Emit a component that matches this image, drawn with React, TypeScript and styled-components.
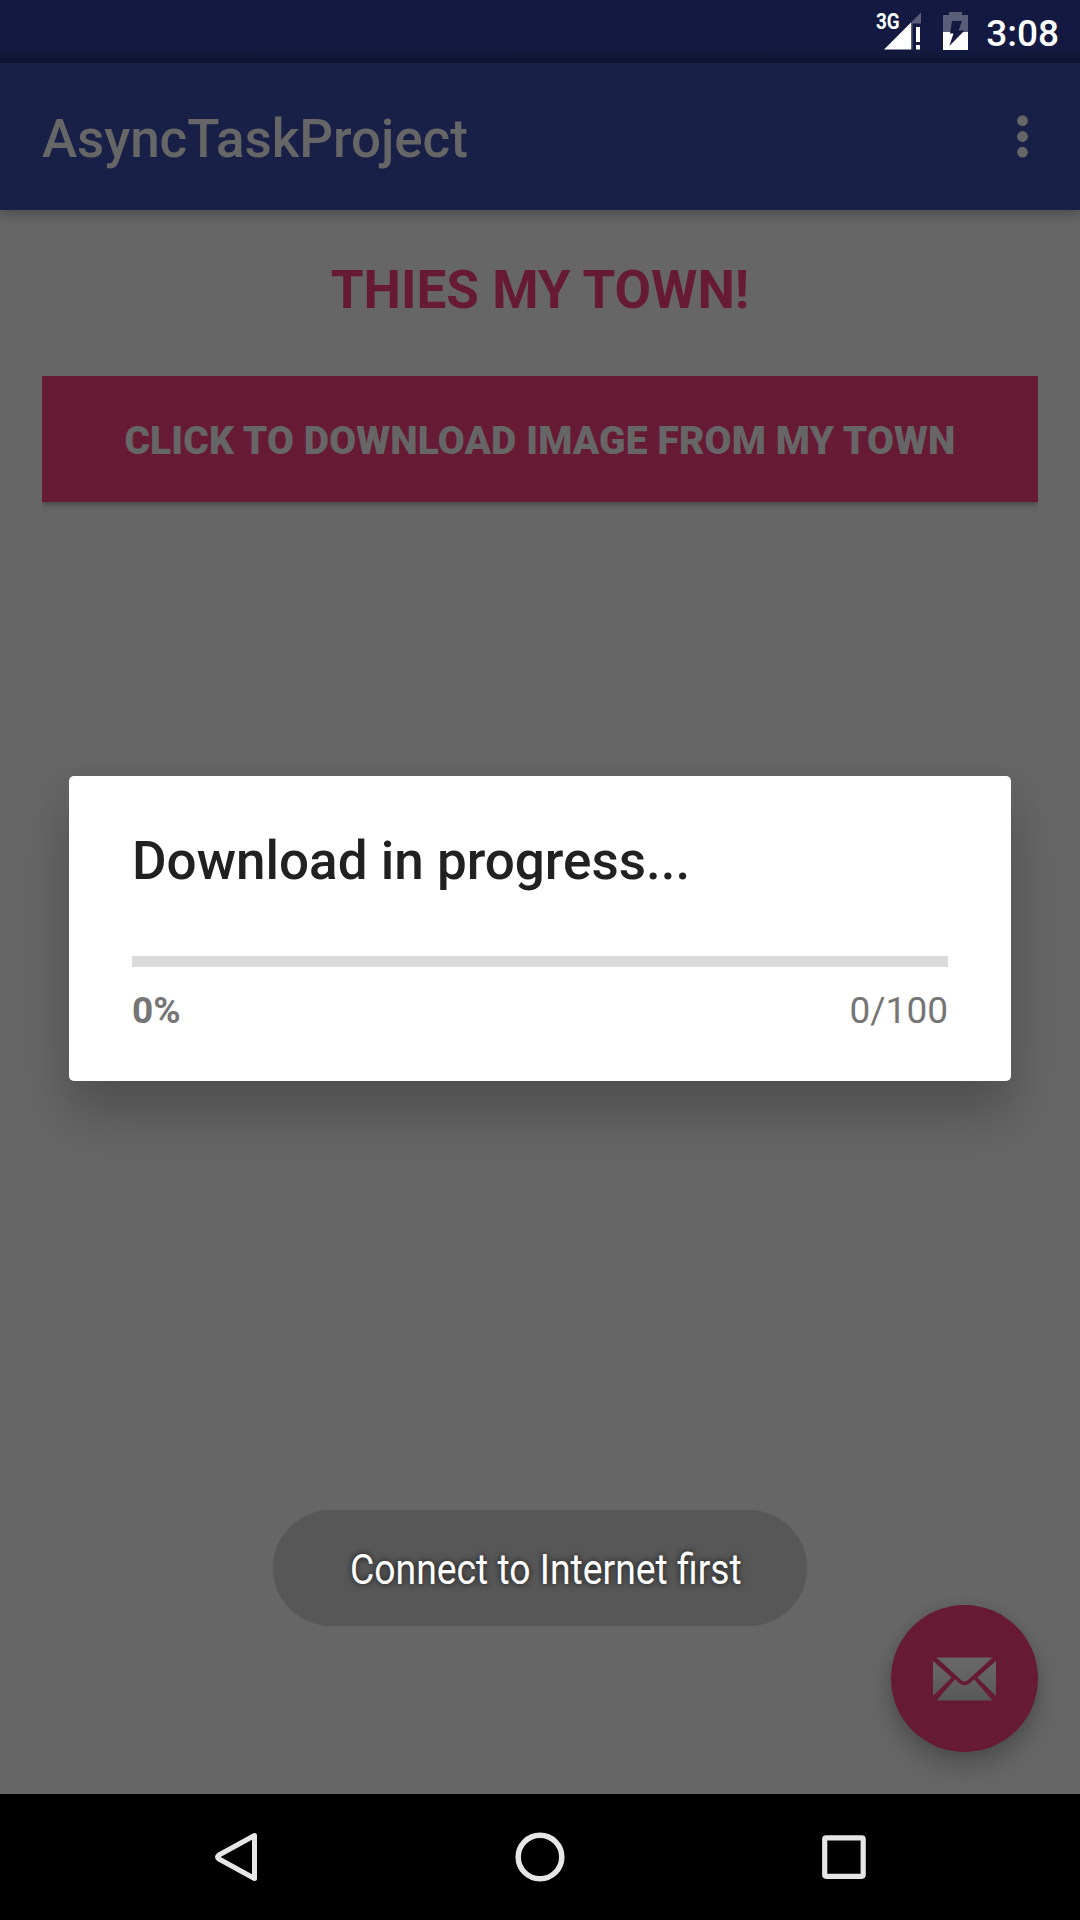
import React from "react";
import styled, { createGlobalStyle } from "styled-components";

const GlobalStyle = createGlobalStyle`
  html, body { margin: 0; padding: 0; background: #666666; }
  * { box-sizing: border-box; }
  body { font-family: Roboto, "Liberation Sans", sans-serif; }
`;

const Screen = styled.div`
  position: relative;
  display: flex;
  flex-direction: column;
  width: 1080px;
  height: 1920px;
  overflow: hidden;
  background: #666666;
`;

const StatusBar = styled.header`
  display: flex;
  align-items: flex-start;
  justify-content: flex-end;
  height: 63px;
  padding: 12px 21px 0 0;
  background: linear-gradient(#131940 0, #131940 48px, #12183a 56px, #111531 63px);
`;

const NetworkLabel = styled.span`
  display: block;
  width: 0;
  font-size: 21.5px;
  line-height: 20px;
  font-weight: 700;
  color: #ffffff;
  white-space: nowrap;
`;

const CondensedLabel = styled.span<{ $scale: number }>`
  display: inline-block;
  transform: scaleX(${(p) => p.$scale});
  transform-origin: left center;
`;

const StatusIcon = styled.svg<{ $gap: number }>`
  display: block;
  flex: none;
  margin-right: ${(p) => p.$gap}px;
`;

const Clock = styled.time`
  font-size: 37px;
  line-height: 43px;
  font-weight: 500;
  color: #ffffff;
`;

const AppBar = styled.div`
  display: flex;
  align-items: center;
  justify-content: space-between;
  height: 147px;
  padding: 0 51px 0 42px;
  background: #192048;
  box-shadow: 0 5px 10px rgba(0, 0, 0, 0.24);
  z-index: 1;
`;

const AppTitle = styled.h1`
  margin: 4px 0 0;
  font-size: 53px;
  line-height: 62px;
  font-weight: 500;
  letter-spacing: -0.07px;
  color: #666666;
`;

const Overflow = styled.svg`
  display: block;
`;

const Content = styled.main`
  display: flex;
  flex: 1;
  flex-direction: column;
  padding: 49px 42px 0;
`;

const Heading = styled.h2`
  margin: 0 0 55px;
  font-size: 53px;
  line-height: 62px;
  font-weight: 700;
  text-align: center;
  color: #661a34;
`;

const DownloadButton = styled.button`
  height: 126px;
  padding: 4px 0 0;
  border: 0;
  background: #661a34;
  box-shadow: 0 3px 5px rgba(0, 0, 0, 0.28);
  clip-path: inset(-12px 0);
  font-family: inherit;
  font-size: 39px;
  font-weight: 900;
  letter-spacing: 0.12px;
  color: #666666;
`;

const NavBar = styled.nav`
  display: flex;
  justify-content: center;
  height: 126px;
  background: #000000;
`;

const NavIcon = styled.svg`
  display: block;
  width: 304px;
  height: 126px;
`;

const DialogLayer = styled.div`
  position: absolute;
  inset: 63px 0 126px;
  display: flex;
  align-items: center;
  justify-content: center;
  z-index: 2;
`;

const Dialog = styled.section`
  display: flex;
  flex-direction: column;
  width: 942px;
  height: 305px;
  padding: 54px 63px 0;
  border-radius: 5px;
  background: #ffffff;
  box-shadow: 0 36px 50px rgba(0, 0, 0, 0.2), 0 0 40px rgba(0, 0, 0, 0.05);
`;

const DialogTitle = styled.h3`
  margin: 0 0 64px;
  font-size: 53px;
  line-height: 62px;
  font-weight: 500;
  color: #212121;
`;

const ProgressTrack = styled.div`
  height: 11px;
  background: #dbdbdb;
`;

const ProgressInfo = styled.div`
  display: flex;
  justify-content: space-between;
  margin-top: 22px;
  font-size: 37px;
  line-height: 43px;
  color: #757575;
`;

const Percent = styled.span`
  font-weight: 700;
`;

const Toast = styled.div`
  position: absolute;
  left: 273px;
  top: 1510px;
  display: flex;
  align-items: center;
  width: 534px;
  height: 116px;
  padding: 3px 0 0 76.5px;
  border-radius: 58px;
  background: #575757;
  font-size: 42px;
  line-height: 50px;
  color: #ffffff;
  text-shadow: 0 0 7px rgba(0, 0, 0, 0.75);
  white-space: nowrap;
  z-index: 3;
`;

const Fab = styled.button`
  position: absolute;
  left: 891px;
  top: 1605px;
  display: flex;
  align-items: center;
  justify-content: center;
  width: 147px;
  height: 147px;
  padding: 0;
  border: 0;
  border-radius: 50%;
  background: #661a34;
  box-shadow: 0 14px 24px rgba(0, 0, 0, 0.23), 0 0 12px rgba(0, 0, 0, 0.08);
`;

const App = () => (
  <Screen>
    <GlobalStyle />
    <StatusBar>
      <NetworkLabel>
        <CondensedLabel $scale={0.88}>3G</CondensedLabel>
      </NetworkLabel>
      <StatusIcon $gap={22} width="45" height="39" viewBox="0 0 45 39">
        <path d="M45 .500V11.500H36.500V37.500H35V10.500z" fill="#5a5e79" />
        <path d="M8 37.500 35 10.500v27z" fill="#ffffff" />
        <path d="M40 15h4v15h-4zM40 33h4v4.500h-4z" fill="#ffffff" />
      </StatusIcon>
      <StatusIcon $gap={18} width="25" height="38" viewBox="0 0 25 38">
        <path d="M6 0h13v3h6v17H0V3h6z" fill="#5a5e79" />
        <path d="M0 20h25v18H0z" fill="#ffffff" />
        <path d="M9 9H19L15.500 18.500H21.500L6.300 34L10.500 21.500H7z" fill="#131940" />
      </StatusIcon>
      <Clock>3:08</Clock>
    </StatusBar>
    <AppBar>
      <AppTitle>AsyncTaskProject</AppTitle>
      <Overflow width="13" height="45" viewBox="0 0 13 45">
        <circle cx="6.500" cy="6.700" r="5.400" fill="#666666" />
        <circle cx="6.500" cy="22.500" r="5.400" fill="#666666" />
        <circle cx="6.500" cy="38.200" r="5.400" fill="#666666" />
      </Overflow>
    </AppBar>
    <Content>
      <Heading>THIES MY TOWN!</Heading>
      <DownloadButton>CLICK TO DOWNLOAD IMAGE FROM MY TOWN</DownloadButton>
    </Content>
    <NavBar>
      <NavIcon viewBox="0 0 304 126">
        <path
          d="M170.500 41.500V84.500L134.500 64.700Q132.500 63 134.500 61.300z"
          fill="none"
          stroke="#e6e6e6"
          strokeWidth="5"
          strokeLinejoin="round"
        />
      </NavIcon>
      <NavIcon viewBox="0 0 304 126">
        <circle cx="152" cy="63" r="21.800" fill="none" stroke="#e6e6e6" strokeWidth="5.500" />
      </NavIcon>
      <NavIcon viewBox="0 0 304 126">
        <rect x="132.700" y="43.800" width="38.500" height="38.500" rx="1.500" fill="none" stroke="#e6e6e6" strokeWidth="5.200" />
      </NavIcon>
    </NavBar>
    <Fab aria-label="Email">
      <svg width="63" height="44" viewBox="0 0 63 44">
        <defs>
          <linearGradient id="paper" x1="0" y1="0" x2="0" y2="44" gradientUnits="userSpaceOnUse">
            <stop offset="0.25" stopColor="#666666" />
            <stop offset="1" stopColor="#575757" />
          </linearGradient>
        </defs>
        <path
          d="M3.500 .5H59.500L35 23Q31.500 26 28 23zM0 4 18.700 20.500 0 39zM63 4V39L44.300 20.500zM22 22.300 26.500 26.500Q31.500 30 36.500 26.500L41 22.300 59.500 43.500H3.500z"
          fill="url(#paper)"
        />
      </svg>
    </Fab>
    <DialogLayer>
      <Dialog role="dialog">
        <DialogTitle>Download in progress...</DialogTitle>
        <ProgressTrack />
        <ProgressInfo>
          <Percent>0%</Percent>
          <span>0/100</span>
        </ProgressInfo>
      </Dialog>
    </DialogLayer>
    <Toast>
      <CondensedLabel $scale={0.888}>Connect to Internet first</CondensedLabel>
    </Toast>
  </Screen>
);

export default App;
